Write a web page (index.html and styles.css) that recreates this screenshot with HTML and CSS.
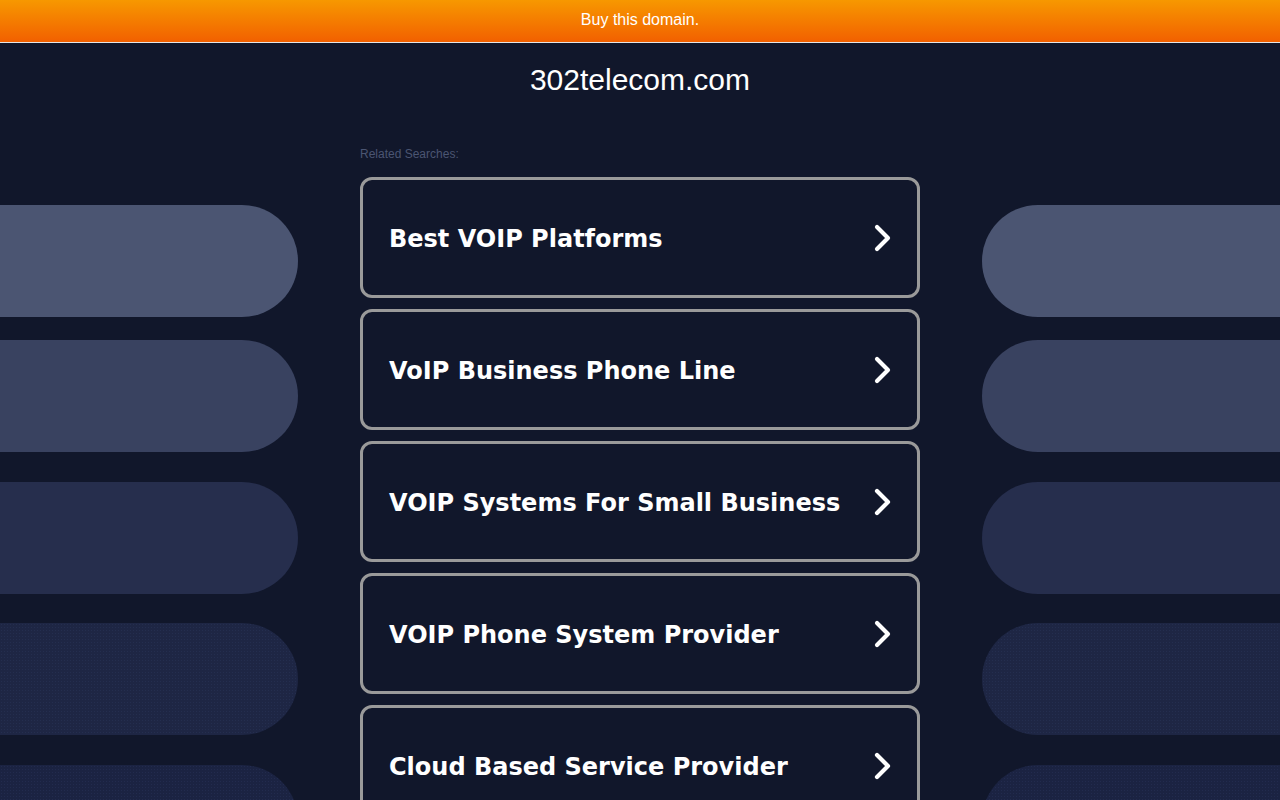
FILE: index.html
```html
<!DOCTYPE html>
<html lang="en">
<head>
<meta charset="utf-8">
<title>302telecom.com</title>
<link rel="stylesheet" href="styles.css">
</head>
<body>
<div class="topbar"><a class="buy" href="#">Buy this domain.</a></div>
<div class="stage">
  <div class="side side-left">
    <div class="pill p1"></div>
    <div class="pill p2"></div>
    <div class="pill p3"></div>
    <div class="pill p4"></div>
    <div class="pill p5"></div>
  </div>
  <main class="center">
    <h1 class="domain">302telecom.com</h1>
    <div class="related">Related Searches:</div>
    <ul class="links">
      <li><a class="card" href="#"><span class="label">Best VOIP Platforms</span><svg class="chev" width="20" height="30" viewBox="0 0 20 30"><polyline points="4,4 15,15 4,26" fill="none" stroke="#fff" stroke-width="4.2" stroke-linecap="round" stroke-linejoin="round"/></svg></a></li>
      <li><a class="card" href="#"><span class="label">VoIP Business Phone Line</span><svg class="chev" width="20" height="30" viewBox="0 0 20 30"><polyline points="4,4 15,15 4,26" fill="none" stroke="#fff" stroke-width="4.2" stroke-linecap="round" stroke-linejoin="round"/></svg></a></li>
      <li><a class="card" href="#"><span class="label">VOIP Systems For Small Business</span><svg class="chev" width="20" height="30" viewBox="0 0 20 30"><polyline points="4,4 15,15 4,26" fill="none" stroke="#fff" stroke-width="4.2" stroke-linecap="round" stroke-linejoin="round"/></svg></a></li>
      <li><a class="card" href="#"><span class="label">VOIP Phone System Provider</span><svg class="chev" width="20" height="30" viewBox="0 0 20 30"><polyline points="4,4 15,15 4,26" fill="none" stroke="#fff" stroke-width="4.2" stroke-linecap="round" stroke-linejoin="round"/></svg></a></li>
      <li><a class="card" href="#"><span class="label">Cloud Based Service Provider</span><svg class="chev" width="20" height="30" viewBox="0 0 20 30"><polyline points="4,4 15,15 4,26" fill="none" stroke="#fff" stroke-width="4.2" stroke-linecap="round" stroke-linejoin="round"/></svg></a></li>
    </ul>
  </main>
  <div class="side side-right">
    <div class="pill p1"></div>
    <div class="pill p2"></div>
    <div class="pill p3"></div>
    <div class="pill p4"></div>
    <div class="pill p5"></div>
  </div>
</div>
</body>
</html>
```
FILE: styles.css
```css
html, body {
  margin: 0;
  padding: 0;
  height: 100%;
  overflow: hidden;
  background: #11172b;
  font-family: "Liberation Sans", Arial, sans-serif;
}
.topbar {
  height: 42px;
  border-bottom: 1px solid #e6e6e6;
  background: linear-gradient(to bottom, #f79800, #f26000);
  display: flex;
  align-items: center;
  justify-content: center;
}
.buy {
  color: #fff;
  font-size: 16px;
  text-decoration: none;
  line-height: 18px;
  margin-top: -2px;
}
.stage {
  display: flex;
  justify-content: space-between;
}
.side {
  width: 298px;
  flex: none;
  display: flex;
  flex-direction: column;
}
.pill {
  height: 112px;
  flex: none;
}
.side-left .pill { border-radius: 0 56px 56px 0; }
.side-right .pill { border-radius: 56px 0 0 56px; }
.p1 { margin-top: 162px; background: #4b5572; }
.p2 { margin-top: 23px; background: #394260; }
.p3 { margin-top: 30px; background: #262e4d; }
.p4 {
  margin-top: 29px;
  background-color: #1e2644;
  background-image: radial-gradient(circle, rgba(60,72,120,0.22) 0.6px, transparent 0.9px);
  background-size: 3px 3px;
}
.p5 {
  margin-top: 30px;
  background-color: #1b2342;
  background-image: radial-gradient(circle, rgba(60,72,120,0.22) 0.6px, transparent 0.9px);
  background-size: 3px 3px;
}
.center {
  width: 560px;
  flex: none;
}
.domain {
  margin: 20px 0 0;
  text-align: center;
  color: #fff;
  font-weight: normal;
  font-size: 30px;
  line-height: 34px;
}
.related {
  margin-top: 50px;
  font-size: 12px;
  line-height: 14px;
  color: #4b5572;
}
.links {
  list-style: none;
  margin: 16px 0 0;
  padding: 0;
  display: flex;
  flex-direction: column;
  gap: 11px;
}
.card {
  box-sizing: border-box;
  height: 121px;
  border: 3px solid #9a9a9a;
  border-radius: 12px;
  display: flex;
  align-items: center;
  justify-content: space-between;
  padding: 0 24px 0 26px;
  text-decoration: none;
}
.label {
  color: #fff;
  font-family: "DejaVu Sans", Verdana, sans-serif;
  font-weight: bold;
  font-size: 24px;
  line-height: 30px;
  margin-top: 3px;
}
.chev {
  display: block;
  flex: none;
}
```
